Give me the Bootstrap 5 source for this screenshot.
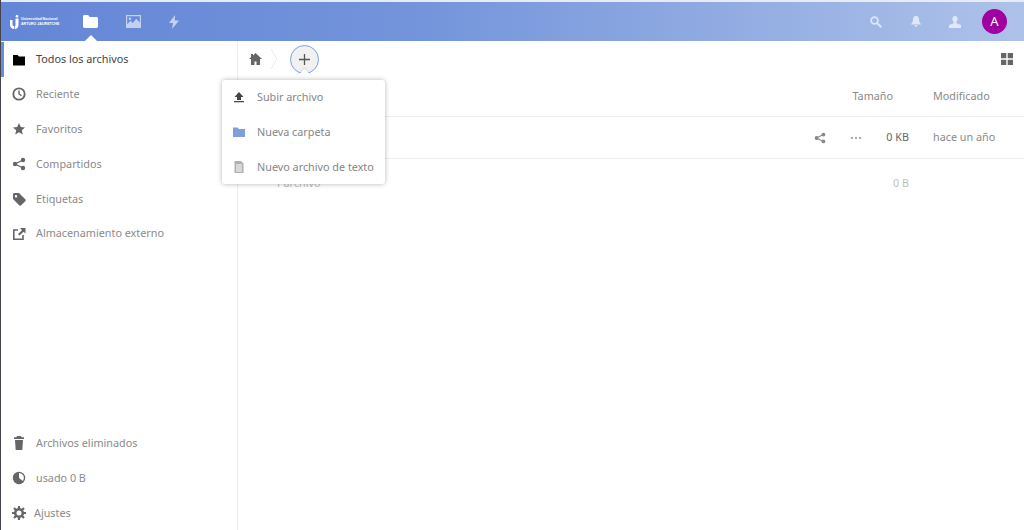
<!DOCTYPE html>
<html lang="es">
<head>
<meta charset="utf-8">
<title>Archivos</title>
<link href="https://cdn.jsdelivr.net/npm/bootstrap@5.3.0/dist/css/bootstrap.min.css" rel="stylesheet">
<style>
html,body{height:530px;overflow:hidden}
body{font-family:"Noto Sans","Open Sans",sans-serif;font-size:10.8px;color:#8a8a8a;background:#fff;border-left:1px solid #45434d}
.topline{height:2px;background:#e6ebf5}
.hdr{height:39px;background:linear-gradient(90deg,#6486d6 0%,#7394db 40%,#aec2e9 100%);padding-left:9px;padding-right:17px}
.brand{width:50px;height:15px;color:#fff;line-height:1;gap:1px}
.brand-txt{font:700 3.6px/4.5px "Liberation Sans",sans-serif;white-space:nowrap}
.hnav{margin-left:23px;gap:28px}
.hnav svg{display:block}
.hactive{position:relative}
.hactive::after{content:"";position:absolute;left:50%;margin-left:-6px;bottom:-13px;border:6px solid transparent;border-top:0;border-bottom-color:#fff}
.hright{gap:28px}
.hsearch{margin-right:1px}
.avatar{width:25px;height:25px;border-radius:50%;background:#a0009f;color:#fff;font-size:13px;line-height:25px;text-align:center;margin-left:-7px}
.main{height:489px}
.side{width:237px;border-right:1px solid #eeeeee;flex:none;padding-top:1px}
.sitem{height:34.8px;padding-left:11px;gap:10px;color:#8a8a8a;text-decoration:none;white-space:nowrap}
.sitem svg{width:14px;height:14px;flex:none}
.sitem.on{color:#444;box-shadow:inset 3px 0 0 #6b8cd8;height:35px}
.sfoot{margin-top:auto}
.gear{gap:8px}
.content{min-width:0;position:relative}
.crumbs{height:36px;padding:0 11px 0 11px}
.plus{width:29px;height:29px;border-radius:50%;border:1px solid #7f9fdc;background:#f1f1f1;color:#555;margin-left:6px;position:relative}
.plus::after{content:"";position:absolute;left:8px;bottom:-9px;width:11px;height:11px;background:#fff;transform:rotate(45deg);box-shadow:-1px -1px 2px rgba(0,0,0,.08)}
.chev{margin-left:8px;margin-right:6px}
.thead-row{height:40px;border-bottom:1px solid #eeeeee}
.frow{height:42px;border-bottom:1px solid #eeeeee}
.csize{width:60px;text-align:right}
.csize-head{padding-right:16px;width:76px}
.csize-row{width:47px;color:#666}
.cdate{width:115px;padding-left:24px;white-space:nowrap}
.ghost{opacity:.55;height:48px;line-height:48px}
.ghost-name{position:absolute;left:39px;top:0;line-height:48px}
.dropbox{position:absolute;left:-16px;top:3px;width:163px;height:104px;background:#fff;border-radius:3px;box-shadow:0 0 5px rgba(0,0,0,.3);z-index:5}
.ditem{height:34.7px;padding-left:11px;gap:12px;white-space:nowrap;color:#868686}
.ditem svg{width:12px;height:12px;flex:none}
</style>
</head>
<body>
<div class="topline"></div>
<header class="hdr d-flex align-items-center">
  <div class="brand d-flex align-items-center">
    <svg width="10" height="14" viewBox="0 0 10 14"><path fill="#fff" d="M0 5h2.500v4.500c0 1 .7 1.600 1.800 1.600V14C1.500 14 0 12.300 0 9.500zM5.500 3.500H8.500v6.300C8.500 12.300 7 14 5 14V11c.3 0 .5-.4.500-1z"/><circle cx="7" cy="1.300" r="1.300" fill="#fff"/></svg>
    <span class="brand-txt">Universidad Nacional<br>ARTURO JAURETCHE</span>
  </div>
  <nav class="hnav d-flex align-items-center">
    <span class="hactive"><svg width="15" height="13" viewBox="0 0 15 13"><path fill="#fff" d="M0 1.500C0 .7.6 0 1.400 0h3.700l1.600 2h6.900c.8 0 1.400.6 1.400 1.400v8.200c0 .8-.6 1.400-1.400 1.400H1.400C.6 13 0 12.400 0 11.600z"/></svg></span>
    <span><svg width="15" height="13" viewBox="0 0 15 13" style="opacity:.6"><path fill="#fff" fill-rule="evenodd" d="M0 0h15v13H0zM1.200 1.200v8l3.300-3.400 2.300 2.300 3.500-4.400 3.500 4V1.200z"/><circle cx="4" cy="3.800" r="1.300" fill="#fff"/></svg></span>
    <span><svg width="10" height="14" viewBox="0 0 10 14" style="opacity:.6"><path fill="#fff" d="M6 0 0 8h4l-1 6 7-8.500H5.800z"/></svg></span>
  </nav>
  <div class="hright d-flex align-items-center ms-auto">
    <svg class="hsearch" width="12" height="12" viewBox="0 0 12 12" style="opacity:.65"><circle cx="4.500" cy="4.500" r="3.400" fill="none" stroke="#fff" stroke-width="1.800"/><path d="m7 7 4.300 4.300" stroke="#fff" stroke-width="2"/></svg>
    <svg width="10" height="11" viewBox="0 0 10 11" style="opacity:.65"><path fill="#fff" d="M5 0C2.800 0 2 1.800 2 3.500 2 6 .5 7 0 8.500h10C9.500 7 8 6 8 3.500 8 1.800 7.200 0 5 0zM3.500 9.300h3C6.300 10.300 5.700 11 5 11s-1.300-.7-1.500-1.700z"/></svg>
    <svg width="12" height="12" viewBox="0 0 12 12" style="opacity:.65"><path fill="#fff" d="M6 0c1.600 0 2.600 1.200 2.600 2.800 0 1.200-.5 2.300-1.200 3v1.400L12 9v3H0V9l4.600-1.800V5.800c-.7-.7-1.200-1.800-1.200-3C3.400 1.200 4.400 0 6 0z"/></svg>
    <div class="avatar">A</div>
  </div>
</header>
<div class="main d-flex">
  <aside class="side d-flex flex-column">
    <a class="sitem on d-flex align-items-center"><svg viewBox="0 0 14 14"><path fill="#000" d="M1 2h4.500L7 3.500h6V12.500H1z"/></svg><span>Todos los archivos</span></a>
    <a class="sitem d-flex align-items-center"><svg viewBox="0 0 14 14"><circle cx="7" cy="7" r="5.700" fill="none" stroke="#666" stroke-width="1.800"/><path d="M7 3.500V7l2.500 1.800" fill="none" stroke="#666" stroke-width="1.400"/></svg><span>Reciente</span></a>
    <a class="sitem d-flex align-items-center"><svg viewBox="0 0 14 14"><path fill="#666" d="m7 1 1.800 4 4.200.4-3.200 2.900 1 4.300L7 10.300l-3.800 2.300 1-4.300L1 5.400 5.200 5z"/></svg><span>Favoritos</span></a>
    <a class="sitem d-flex align-items-center"><svg viewBox="0 0 14 14"><circle cx="3" cy="7" r="2.200" fill="#666"/><circle cx="11" cy="3" r="2.200" fill="#666"/><circle cx="11" cy="11" r="2.200" fill="#666"/><path d="M11 3 3 7l8 4" fill="none" stroke="#666" stroke-width="1.300"/></svg><span>Compartidos</span></a>
    <a class="sitem d-flex align-items-center"><svg viewBox="0 0 14 14"><path fill="#666" fill-rule="evenodd" d="M1 2.500C1 1.700 1.700 1 2.500 1H7l6.500 6.500c.4.400.4 1 0 1.400l-4.600 4.600c-.4.400-1 .4-1.400 0L1 7zM4 3a1.200 1.200 0 1 0 0 2.400A1.200 1.200 0 0 0 4 3z"/></svg><span>Etiquetas</span></a>
    <a class="sitem d-flex align-items-center"><svg viewBox="0 0 14 14"><path fill="none" stroke="#666" stroke-width="1.600" d="M6 3H1.800v9.200H11V8"/><path fill="#666" d="M8 1h5.500v5.500L11.500 4.700 7.500 8.500 6 7l4-3.800z"/></svg><span>Almacenamiento externo</span></a>
    <div class="sfoot">
      <a class="sitem d-flex align-items-center"><svg viewBox="0 0 14 14"><path fill="#666" d="M5 0h4l.6 1.200H12V3H2V1.200h2.400zM3 4h8l-.7 10H3.700z"/></svg><span>Archivos eliminados</span></a>
      <a class="sitem d-flex align-items-center"><svg viewBox="0 0 14 14"><circle cx="7" cy="7" r="6.200" fill="#666"/><path d="M7 2v5l4 3A5 5 0 0 0 7 2z" fill="#fff"/></svg><span>usado 0 B</span></a>
      <a class="sitem gear d-flex align-items-center"><svg viewBox="0 0 14 14"><circle cx="7" cy="7" r="3.800" fill="none" stroke="#666" stroke-width="2.600"/><path stroke="#666" stroke-width="2.200" d="M7 0v3M7 11v3M0 7h3M11 7h3M2 2l2 2M10 10l2 2M2 12l2-2M10 4l2-2"/></svg><span>Ajustes</span></a>
    </div>
  </aside>
  <main class="content flex-grow-1">
    <div class="crumbs d-flex align-items-center">
      <svg width="13" height="12" viewBox="0 0 13 12"><path fill="#666" d="M6.500 0 13 6h-2v6H7.500V8.500h-2V12H2V6H0l2-1.800V1h2v1.400z"/></svg>
      <svg class="chev" width="8" height="22" viewBox="0 0 8 22"><path d="m1 1 6 10-6 10" fill="none" stroke="#ececec"/></svg>
      <div class="plus d-flex align-items-center justify-content-center"><svg width="11" height="11" viewBox="0 0 11 11"><path d="M5.500 0v11M0 5.500h11" stroke="#555" stroke-width="1.300"/></svg></div>
      <svg class="ms-auto" width="12" height="12" viewBox="0 0 12 12"><path fill="#666" d="M0 0h5.300v5.300H0zM6.700 0H12v5.300H6.700zM0 6.700h5.300V12H0zM6.700 6.700H12V12H6.700z"/></svg>
    </div>
    <div class="position-relative">
      <div class="dropbox">
        <div class="ditem d-flex align-items-center"><svg viewBox="0 0 12 12"><path fill="#444" d="M6 1 10.500 6H8v3H4V6H1.500zM1 10h10v1.300H1z"/></svg><span>Subir archivo</span></div>
        <div class="ditem d-flex align-items-center"><svg viewBox="0 0 12 12"><path fill="#7f9fdc" d="M0 1.500h4.500L6 3h6v8H0z"/></svg><span>Nueva carpeta</span></div>
        <div class="ditem d-flex align-items-center"><svg viewBox="0 0 12 12"><path fill="#b0b0b0" d="M1.500 0H8l2.500 2.500V12h-9z"/><path stroke="#fff" d="M3 4h6M3 6h6M3 8h6M3 10h6"/></svg><span>Nuevo archivo de texto</span></div>
      </div>
      <div class="thead-row d-flex align-items-center justify-content-end">
        <span class="csize csize-head">Tamaño</span><span class="cdate">Modificado</span>
      </div>
      <div class="frow d-flex align-items-center justify-content-end">
        <svg width="12" height="12" viewBox="0 0 14 14" class="me-4"><circle cx="3" cy="7" r="2.200" fill="#888"/><circle cx="11" cy="3" r="2.200" fill="#888"/><circle cx="11" cy="11" r="2.200" fill="#888"/><path d="M11 3 3 7l8 4" fill="none" stroke="#888" stroke-width="1.300"/></svg>
        <svg width="12" height="4" viewBox="0 0 12 4"><circle cx="2" cy="2" r="1.100" fill="#999"/><circle cx="6" cy="2" r="1.100" fill="#999"/><circle cx="10" cy="2" r="1.100" fill="#999"/></svg>
        <span class="csize csize-row">0 KB</span><span class="cdate">hace un año</span>
      </div>
      <div class="ghost position-relative d-flex justify-content-end">
        <span class="ghost-name">Parchivo</span>
        <span class="csize">0 B</span><span class="cdate"></span>
      </div>
    </div>
  </main>
</div>
<script src="https://cdn.jsdelivr.net/npm/bootstrap@5.3.0/dist/js/bootstrap.bundle.min.js"></script>
</body>
</html>
